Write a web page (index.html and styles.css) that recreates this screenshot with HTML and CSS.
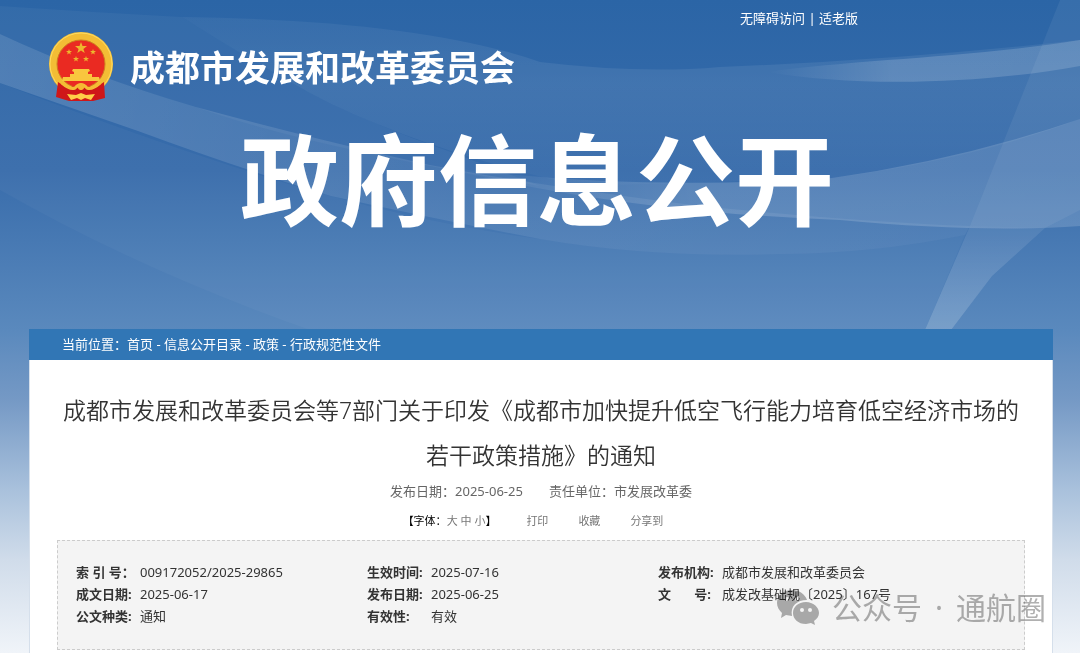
FILE: index.html
```
<!DOCTYPE html>
<html lang="zh-CN">
<head>
    <meta charset="UTF-8">
    <meta name="viewport" content="width=device-width, initial-scale=1.0">
    <title>成都市发展和改革委员会 - 政府信息公开</title>
    <link rel="stylesheet" href="styles.css">
</head>
<body>

    <!-- 背景光带 -->
    <svg class="waves" viewBox="0 0 1080 330" preserveAspectRatio="none" aria-hidden="true">
        <defs>
            <linearGradient id="fadeLeft" x1="0" y1="0" x2="1" y2="0">
                <stop offset="0" stop-color="#fff" stop-opacity=".15"/>
                <stop offset=".5" stop-color="#fff" stop-opacity=".08"/>
                <stop offset="1" stop-color="#fff" stop-opacity=".06"/>
            </linearGradient>
            <linearGradient id="fadeRight" x1="0" y1="0" x2="1" y2="0">
                <stop offset="0" stop-color="#fff" stop-opacity="0"/>
                <stop offset=".4" stop-color="#fff" stop-opacity=".16"/>
                <stop offset="1" stop-color="#fff" stop-opacity=".15"/>
            </linearGradient>
            <linearGradient id="fadeDown" x1="0" y1="0" x2="0" y2="1">
                <stop offset="0" stop-color="#fff" stop-opacity=".02"/>
                <stop offset="1" stop-color="#fff" stop-opacity=".14"/>
            </linearGradient>
            <linearGradient id="fadeUp" x1="0" y1="0" x2="0" y2="1">
                <stop offset="0" stop-color="#fff" stop-opacity=".05"/>
                <stop offset=".4" stop-color="#fff" stop-opacity=".08"/>
                <stop offset="1" stop-color="#fff" stop-opacity=".02"/>
            </linearGradient>
        </defs>
        <path fill="url(#fadeLeft)" d="M0 34Q90 76 196 107Q310 138 430 165Q540 186 700 206Q860 222 970 226L965 235Q870 254 780 254Q650 258 540 239Q440 220 331 196Q241 169 138 131Q60 104 0 83Z"/>
        <path fill="#fff" opacity=".04" d="M0 6Q90 12 182 17Q240 54 310 93Q380 128 448 151L540 186Q300 145 196 107Q90 76 0 34Z"/>
        <path fill="#fff" opacity=".03" d="M0 83Q200 160 331 196Q440 226 540 239Q650 258 780 254Q870 254 965 235L925 330L310 330Q140 270 0 190Z"/>
        <path fill="url(#fadeUp)" d="M182 17Q420 20 540 62Q640 74 720 67Q900 60 1080 40L1080 119Q970 160 832 178L580 186Q420 150 310 93Q240 54 182 17Z"/>
        <path fill="url(#fadeRight)" d="M767 72C860 59 970 58 1080 40L1080 66C970 86 850 86 767 72Z"/>
        <path fill="url(#fadeRight)" d="M430 165Q620 192 832 178Q960 160 1080 119L1080 226Q980 233 840 220Q620 212 430 165Z"/>
        <path fill="#fff" opacity=".06" d="M1060 0L1080 0L1080 210L1045 228L992 276L951 330L925 330L970 226Z"/>
        <path fill="url(#fadeDown)" d="M970 226L1045 228L992 276L951 330L925 330Z"/>
    </svg>

    <div class="header">
        <div class="toplinks">
            <a href="#">无障碍访问</a> | <a href="#">适老版</a>
        </div>
        <a class="logo" href="#">
            <svg class="emblem" viewBox="0 0 66 70" aria-hidden="true">
                <defs>
                    <path id="star" d="M0-6L1.5-2L6-2L2.4 1L3.7 5L0 2.6L-3.7 5L-2.4 1L-6-2L-1.5-2Z"/>
                </defs>
                <circle cx="33" cy="33" r="28" fill="#ea2a22" stroke="#f3bd35" stroke-width="8"/>
                <circle cx="33" cy="33" r="31" fill="none" stroke="#ffdc62" stroke-width="1"/>
                <circle cx="33" cy="33" r="24" fill="none" stroke="#cf7e20" stroke-width="1"/>
                <g fill="#edb62e">
                    <use href="#star" transform="translate(33 17)"/>
                    <use href="#star" transform="translate(21 21) scale(.5)"/>
                    <use href="#star" transform="translate(45 21) scale(.5)"/>
                    <use href="#star" transform="translate(28 28) scale(.5)"/>
                    <use href="#star" transform="translate(38 28) scale(.5)"/>
                </g>
                <path fill="#f9c63e" d="M25 38L41 38L42 40L40 41L40 43L44 43L44 46L51 46L52 50L14 50L15 46L22 46L22 43L26 43L26 41L24 40Z"/>
                <path fill="#cf1719" d="M10 51L19 57L27 55L33 59L39 55L47 57L56 51L57 67L45 70L21 70L8 66Z"/>
                <path fill="none" stroke="#f5bd35" stroke-width="3" d="M14 52Q22 59 27 57Q33 50 39 57Q44 59 52 52"/>
                <circle cx="33" cy="56" r="3" fill="#f7b832"/>
                <path fill="#ffcf48" d="M19 63L28 64L33 62L38 64L47 63L43 69L37 67L33 69L29 67L23 69Z"/>
            </svg>
            <span>成都市发展和改革委员会</span>
        </a>
        <h1 class="banner">政府信息公开</h1>
    </div>

    <div class="main">
        <div class="position">
            当前位置：<a href="#">首页</a> - <a href="#">信息公开目录</a> - <a href="#">政策</a> - <a href="#">行政规范性文件</a>
        </div>

        <div class="article">
            <h2 class="title">成都市发展和改革委员会等7部门关于印发《成都市加快提升低空飞行能力培育低空经济市场的若干政策措施》的通知</h2>
            <div class="meta">
                <span>发布日期：2025-06-25</span>
                <span>责任单位：市发展改革委</span>
            </div>
            <div class="tools">
                <div class="fontsize">【字体：<button type="button">大</button> <button type="button">中</button> <button type="button">小</button>】</div>
                <button type="button">打印</button>
                <button type="button">收藏</button>
                <button type="button">分享到</button>
            </div>

            <div class="info">
                <table>
                    <tr>
                        <th>索 引 号：</th>
                        <td>009172052/2025-29865</td>
                        <th>生效时间:</th>
                        <td>2025-07-16</td>
                        <th>发布机构:</th>
                        <td>成都市发展和改革委员会</td>
                    </tr>
                    <tr>
                        <th>成文日期:</th>
                        <td>2025-06-17</td>
                        <th>发布日期:</th>
                        <td>2025-06-25</td>
                        <th><span class="spread"><span>文</span><span>号:</span></span></th>
                        <td>成发改基础规〔2025〕167号</td>
                    </tr>
                    <tr>
                        <th>公文种类:</th>
                        <td>通知</td>
                        <th>有效性:</th>
                        <td>有效</td>
                        <th></th>
                        <td></td>
                    </tr>
                </table>
            </div>
        </div>
    </div>

    <div class="watermark">
        <svg viewBox="0 0 42 36" aria-hidden="true">
            <path fill="#b0b0b0" d="M15 0C6 0 0 6 0 13C0 17 2 20 5 23L4 28L9 25L15 26C13 16 20 10 30 10C28 4 22 0 15 0Z"/>
            <path fill="#b0b0b0" d="M29 12C21 12 16 17 16 23C16 29 21 34 29 34L34 33L38 35L37 31C40 29 42 26 42 23C42 17 36 12 29 12Z"/>
            <g fill="#fff">
                <circle cx="10" cy="9" r="2"/>
                <circle cx="20" cy="9" r="2"/>
                <circle cx="25" cy="20" r="2"/>
                <circle cx="33" cy="20" r="2"/>
            </g>
        </svg>
        <span>公众号</span>
        <span>·</span>
        <span>通航圈</span>
    </div>

</body>
</html>
```
FILE: styles.css
```
* {
    box-sizing: border-box;
}

body {
    margin: 0;
    min-height: 100vh;
    display: flex;
    flex-direction: column;
    position: relative;
    font-family: "Noto Sans", "Noto Sans CJK SC", sans-serif;
    font-size: 13px;
    line-height: 22px;
    color: #333;
    background: linear-gradient(#2b65a6 0, #386cab 170px, #5a89bd 330px, #7599c5 400px, #a9c1dc 490px, #d0dcea 560px, #f0f4f9 653px);
}

a {
    color: inherit;
    text-decoration: none;
}

button {
    padding: 0;
    border: 0;
    background: none;
    font: inherit;
    color: #777;
    cursor: pointer;
}

.waves {
    position: absolute;
    top: 0;
    left: 0;
    width: 100%;
    height: 330px;
}

.header {
    position: relative;
    height: 329px;
    color: #fff;
}

.toplinks {
    padding: 7px 222px 0 0;
    text-align: right;
}

.logo {
    display: flex;
    align-items: flex-start;
    gap: 16px;
    width: max-content;
    margin-top: 2px;
    padding-left: 48px;
    font-size: 35px;
    line-height: 74px;
    font-weight: bold;
}

.emblem {
    width: 66px;
    height: 70px;
}

.banner {
    margin: 10px 0 0;
    padding-right: 6px;
    text-align: center;
    font-size: 99px;
    line-height: 130px;
    font-weight: bold;
}

.main {
    position: relative;
    flex: 1;
    display: flex;
    flex-direction: column;
    margin: 0 27px 0 29px;
}

.position {
    padding: 4px 33px 5px;
    color: #fff;
    background: #3176b5;
}

.article {
    flex: 1;
    padding: 28px 27px 0;
    border: 1px solid #d5dfeb;
    border-width: 0 1px;
    background: #fff;
}

.title {
    margin: 0 0 2px;
    text-align: center;
    font-size: 23px;
    line-height: 45px;
    font-weight: 350;
}

.meta {
    display: flex;
    justify-content: center;
    gap: 26px;
    color: #666;
}

.tools {
    display: flex;
    justify-content: center;
    gap: 30px;
    padding: 8px 16px 8px 0;
    font-size: 11px;
}

.fontsize {
    color: #000;
}

.info {
    padding: 20px 75px 22px 18px;
    border: 1px dashed #ccc;
    background: #f4f4f4;
}

.info table {
    width: 100%;
    table-layout: fixed;
    border-collapse: collapse;
}

.info th,
.info td {
    padding: 0;
    text-align: left;
    white-space: nowrap;
}

.info th {
    width: 64px;
}

.spread {
    display: flex;
    justify-content: space-between;
    width: 53px;
}

.watermark {
    position: absolute;
    right: 34px;
    bottom: 24px;
    display: flex;
    align-items: center;
    gap: 13px;
    font-size: 30px;
    line-height: 42px;
    color: #b0b0b0;
    mix-blend-mode: multiply;
}

.watermark svg {
    width: 42px;
    height: 36px;
}
```
